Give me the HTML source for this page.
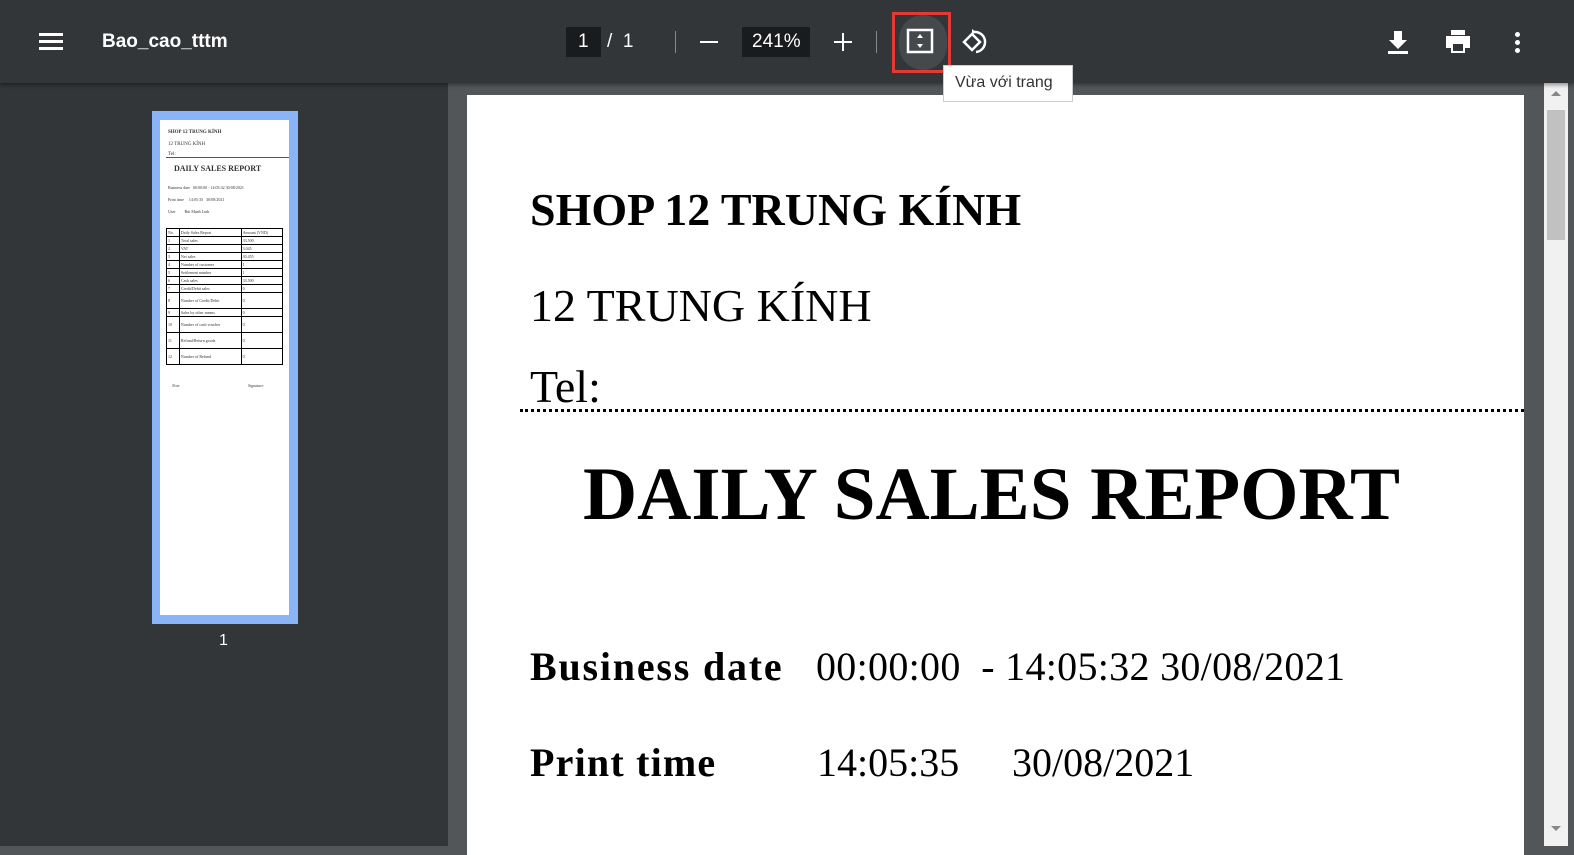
<!DOCTYPE html>
<html><head><meta charset="utf-8"><style>
*{margin:0;padding:0;box-sizing:border-box}
body{width:1574px;height:846px;overflow:hidden;background:#525659;font-family:"Liberation Sans",sans-serif;position:relative}
.tb{position:absolute;left:0;top:0;width:1574px;height:83px;background:#323639;box-shadow:0 2px 4px rgba(0,0,0,.4);z-index:5;color:#fff}
.side{position:absolute;left:0;top:83px;width:448px;height:763px;background:#323639}
.page{position:absolute;left:467px;top:95px;width:1057px;height:760px;background:#fff;font-family:"Liberation Serif",serif;color:#000}
.abs{position:absolute}
.scroll{position:absolute;left:1544px;top:83px;width:24px;height:763px;background:#f1f1f1}
.thumb{position:absolute;left:152px;top:111px;width:146px;height:513px;background:#8ab4f8}
.tin{position:absolute;left:8px;top:9px;width:129px;height:495px;background:#fff;font-family:"Liberation Serif",serif;font-size:5px;color:#333}
table{border-collapse:collapse}
td{border:1px solid #000;font-size:4px;height:8px;padding:0 1px}
</style></head><body>
<div class="tb">
 <div class="abs" style="left:39px;top:33px;width:24px;height:3px;background:#fff"></div>
 <div class="abs" style="left:39px;top:40px;width:24px;height:3px;background:#fff"></div>
 <div class="abs" style="left:39px;top:47px;width:24px;height:3px;background:#fff"></div>
 <div class="abs" style="left:102px;top:31px;font-size:19px;font-weight:bold">Bao_cao_tttm</div>
 <div class="abs" style="left:566px;top:27px;width:35px;height:30px;background:#191b1c"></div>
 <div class="abs" style="left:578px;top:31px;font-size:19px">1</div>
 <div class="abs" style="left:607px;top:31px;font-size:19px">/&nbsp;&nbsp;1</div>
 <div class="abs" style="left:675px;top:31px;width:1px;height:22px;background:#888"></div>
 <div class="abs" style="left:700px;top:41px;width:18px;height:2px;background:#fff"></div>
 <div class="abs" style="left:742px;top:27px;width:68px;height:30px;background:#191b1c"></div>
 <div class="abs" style="left:752px;top:31px;font-size:19px">241%</div>
 <div class="abs" style="left:834px;top:41px;width:18px;height:2px;background:#fff"></div>
 <div class="abs" style="left:842px;top:33px;width:2px;height:18px;background:#fff"></div>
 <div class="abs" style="left:876px;top:31px;width:1px;height:22px;background:#888"></div>
 <div class="abs" style="left:899px;top:15px;width:48px;height:55px;border-radius:24px;background:#46494c"></div>
 <div class="abs" style="left:892px;top:12px;width:59px;height:61px;border:3px solid #e53935"></div>
 <svg class="abs" style="left:906px;top:28px" width="30" height="28" viewBox="0 0 30 28"><rect x="2" y="2" width="24" height="22" fill="none" stroke="#fff" stroke-width="2.5"/><path d="M14 6l-3 4h6zM14 20l-3-4h6z" fill="#fff"/></svg>
 <svg class="abs" style="left:960px;top:27px" width="30" height="30" viewBox="0 0 30 30"><path d="M4 15l8-8 8 8-8 8z" fill="none" stroke="#fff" stroke-width="2.5"/><path d="M14 5a10 10 0 1 1 2 20" fill="none" stroke="#fff" stroke-width="2.5"/><path d="M12 2l4 3-4 3z" fill="#fff"/></svg>
 <svg class="abs" style="left:1386px;top:29px" width="24" height="26" viewBox="0 0 24 26"><path d="M8 2h8v9h5l-9 9-9-9h5z M2 22h20v3H2z" fill="#fff"/></svg>
 <svg class="abs" style="left:1444px;top:28px" width="28" height="26" viewBox="0 0 28 26"><path d="M7 2h14v5H7zM2 8h24v12h-5v5H7v-5H2zM9 16v7h10v-7z" fill="#fff"/></svg>
 <div class="abs" style="left:1515px;top:32px;width:5px;height:5px;border-radius:3px;background:#fff"></div>
 <div class="abs" style="left:1515px;top:40px;width:5px;height:5px;border-radius:3px;background:#fff"></div>
 <div class="abs" style="left:1515px;top:48px;width:5px;height:5px;border-radius:3px;background:#fff"></div>
</div>
<div class="abs" style="left:943px;top:65px;width:130px;height:37px;background:#fff;border:1px solid #ccc;z-index:6;font-size:16px;color:#333;padding:8px 0 0 11px">Vừa với trang</div>
<div class="side">
</div>
<div class="thumb"><div class="tin">
 <div class="abs" style="left:8px;top:10px;font-weight:bold">SHOP 12 TRUNG KÍNH</div>
 <div class="abs" style="left:8px;top:22px">12 TRUNG KÍNH</div>
 <div class="abs" style="left:8px;top:32px">Tel:</div>
 <div class="abs" style="left:6px;top:37px;width:123px;border-top:1px solid #555"></div>
 <div class="abs" style="left:14px;top:44px;font-weight:bold;font-size:8px">DAILY SALES REPORT</div>
 <div class="abs" style="left:8px;top:65px;font-size:4px">Business date &nbsp; 00:00:00 - 14:05:32 30/08/2021</div>
 <div class="abs" style="left:8px;top:77px;font-size:4px">Print time &nbsp;&nbsp;&nbsp; 14:05:35 &nbsp; 30/08/2021</div>
 <div class="abs" style="left:8px;top:89px;font-size:4px">User &nbsp;&nbsp;&nbsp;&nbsp;&nbsp;&nbsp;&nbsp; Bùi Mạnh Linh</div>
 <table class="abs" style="left:6px;top:108px;width:117px">
  <tr><td>No.</td><td>Daily Sales Report</td><td>Amount (VND)</td></tr>
  <tr><td>1</td><td>Total sales</td><td>33.500</td></tr><tr><td>2</td><td>VAT</td><td>3.045</td></tr>
  <tr><td>3</td><td>Net sales</td><td>30.455</td></tr><tr><td>4</td><td>Number of customer</td><td>1</td></tr>
  <tr><td>5</td><td>Settlement number</td><td>1</td></tr><tr><td>6</td><td>Cash sales</td><td>33.500</td></tr>
  <tr><td>7</td><td>Credit/Debit sales</td><td>0</td></tr><tr><td style="height:16px">8</td><td>Number of Credit/Debit</td><td>0</td></tr>
  <tr><td>9</td><td>Sales by other means</td><td>0</td></tr><tr><td style="height:16px">10</td><td>Number of cash voucher</td><td>0</td></tr>
  <tr><td style="height:16px">11</td><td>Refund/Return goods</td><td>0</td></tr><tr><td style="height:16px">12</td><td>Number of Refund</td><td>0</td></tr>
 </table>
 <div class="abs" style="left:12px;top:263px;font-style:italic;font-size:4px">Note</div>
 <div class="abs" style="left:88px;top:263px;font-style:italic;font-size:4px">Signature</div>
</div></div>
<div class="abs" style="left:219px;top:632px;color:#fff;font-size:16px">1</div>
<div class="page">
 <div class="abs" style="left:63px;top:88px;font-size:46px;font-weight:bold">SHOP 12 TRUNG KÍNH</div>
 <div class="abs" style="left:63px;top:184px;font-size:46px">12 TRUNG KÍNH</div>
 <div class="abs" style="left:63px;top:265px;font-size:46px">Tel:</div>
 <div class="abs" style="left:53px;top:314px;width:1004px;border-top:3px dotted #000"></div>
 <div class="abs" style="left:116px;top:357px;font-size:75px;font-weight:bold">DAILY SALES REPORT</div>
 <div class="abs" style="left:63px;top:548px;font-size:40px;font-weight:bold;letter-spacing:1.8px">Business date</div>
 <div class="abs" style="left:349px;top:548px;font-size:40px;letter-spacing:0.3px">00:00:00 &nbsp;- 14:05:32 30/08/2021</div>
 <div class="abs" style="left:63px;top:644px;font-size:40px;font-weight:bold;letter-spacing:1.2px">Print time</div>
 <div class="abs" style="left:350px;top:644px;font-size:40px">14:05:35</div>
 <div class="abs" style="left:545px;top:644px;font-size:40px">30/08/2021</div>
</div>
<div class="scroll">
 <div class="abs" style="left:3px;top:27px;width:18px;height:130px;background:#c1c1c1"></div>
 <div class="abs" style="left:7px;top:8px;border:5px solid transparent;border-bottom-color:#888;border-top:0"></div>
 <div class="abs" style="left:7px;top:743px;border:5px solid transparent;border-top-color:#888;border-bottom:0"></div>
</div>
</body></html>
